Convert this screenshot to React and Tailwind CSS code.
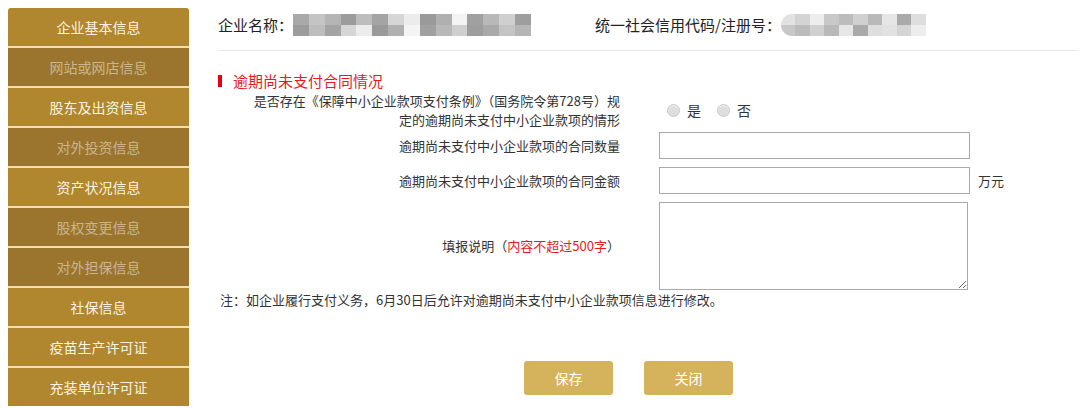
import React from 'react'

const font = { fontFamily: '"Microsoft YaHei", "Noto Sans CJK SC", "Noto Sans", sans-serif' }

const menu = [
  { label: '企业基本信息', on: true },
  { label: '网站或网店信息', on: false },
  { label: '股东及出资信息', on: true },
  { label: '对外投资信息', on: false },
  { label: '资产状况信息', on: true },
  { label: '股权变更信息', on: false },
  { label: '对外担保信息', on: false },
  { label: '社保信息', on: true },
  { label: '疫苗生产许可证', on: true },
  { label: '充装单位许可证', on: true },
]

const nameBlur = ['#a9a9a9', '#c4c4c4', '#b5b5b5', '#9c9c9c', '#bdbdbd', '#a4a4a4', '#d6d6d6', '#ececec', '#9a9a9a', '#b0b0b0', '#f4f4f4', '#a0a0a0', '#b8b8b8', '#cfcfcf', '#9e9e9e']
const codeBlur = ['#e2e2e2', '#d4d4d4', '#ededed', '#c8c8c8', '#bcbcbc', '#d0d0d0', '#b9b9b9', '#e6e6e6', '#a9a9a9', '#dedede']

function Blur({ colors, width, round }) {
  return (
    <div className={`flex h-[22px] overflow-hidden ${round ? 'rounded-l-full' : ''}`} style={{ width }}>
      {colors.map((c, i) => (
        <div key={i} className="flex-1 flex flex-col">
          <div className="flex-1" style={{ background: c }} />
          <div className="flex-1" style={{ background: colors[(i + 3) % colors.length] }} />
        </div>
      ))}
    </div>
  )
}

function Radio({ label }) {
  return (
    <label className="flex items-center gap-[7px]">
      <span className="w-[13px] h-[13px] rounded-full border border-[#c8c8c8] bg-[#dedede] shadow-[inset_0_1px_1px_#f4f4f4]" />
      <span className="text-[14px] text-[#333]">{label}</span>
    </label>
  )
}

export default function App() {
  return (
    <div className="flex w-[1080px] h-[408px] bg-white overflow-hidden" style={font}>
      <div className="ml-[8px] mt-[8px] w-[181px] flex flex-col gap-[2px] bg-[#f2dfb2] self-start rounded-t-[3px]">
        {menu.map((m, i) => (
          <div
            key={m.label}
            className={`h-[38px] flex items-center justify-center text-[14px] ${i === 0 ? 'rounded-t-[3px]' : ''} ${
              m.on ? 'bg-[#b0872f] text-[#fbf3df]' : 'bg-[#9b752d] text-[#c9b68f]'
            }`}
          >
            {m.label}
          </div>
        ))}
      </div>

      <div className="ml-[29px] w-[860px] flex flex-col">
        <div className="h-[51px] flex items-center border-b border-[#e8e8e8] text-[15px] text-[#222]">
          <span>企业名称：</span>
          <Blur colors={nameBlur} width="238px" />
          <span className="ml-[64px]">统一社会信用代码/注册号：</span>
          <Blur colors={codeBlur} width="145px" round />
        </div>

        <div className="mt-[20px] flex items-center h-[20px]">
          <span className="w-[4px] h-[12px] bg-[#e50012]" />
          <span className="ml-[11px] text-[15px] text-[#e8191d]">逾期尚未支付合同情况</span>
        </div>

        <div className="flex items-center text-[13px] text-[#333]">
          <div className="w-[402px] text-right leading-[19px]">
            <div>是否存在《保障中小企业款项支付条例》（国务院令第728号）规</div>
            <div>定的逾期尚未支付中小企业款项的情形</div>
          </div>
          <div className="ml-[47px] flex items-center gap-[16px]">
            <Radio label="是" />
            <Radio label="否" />
          </div>
        </div>

        <div className="flex items-center mt-[3px] text-[13px] text-[#333]">
          <div className="w-[402px] text-right">逾期尚未支付中小企业款项的合同数量</div>
          <input className="ml-[39px] w-[311px] h-[27px] border border-[#a9a9a9] bg-white outline-none" />
        </div>

        <div className="flex items-center mt-[8px] text-[13px] text-[#333]">
          <div className="w-[402px] text-right">逾期尚未支付中小企业款项的合同金额</div>
          <input className="ml-[39px] w-[311px] h-[27px] border border-[#a9a9a9] bg-white outline-none" />
          <span className="ml-[8px]">万元</span>
        </div>

        <div className="flex items-center mt-[8px] text-[13px] text-[#333]">
          <div className="w-[402px] text-right">
            填报说明（<span className="text-[#e8191d]">内容不超过500字</span>）
          </div>
          <textarea className="ml-[39px] w-[309px] h-[88px] border border-[#a9a9a9] bg-white outline-none" />
        </div>

        <div className="mt-[1px] ml-[2px] text-[13px] text-[#333] leading-[18px]">
          注：如企业履行支付义务，6月30日后允许对逾期尚未支付中小企业款项信息进行修改。
        </div>

        <div className="mt-[52px] ml-[306px] flex gap-[31px]">
          <button className="w-[89px] h-[34px] rounded-[3px] bg-[#d4b35c] text-white text-[14px]">保存</button>
          <button className="w-[89px] h-[34px] rounded-[3px] bg-[#d4b35c] text-white text-[14px]">关闭</button>
        </div>
      </div>
    </div>
  )
}
